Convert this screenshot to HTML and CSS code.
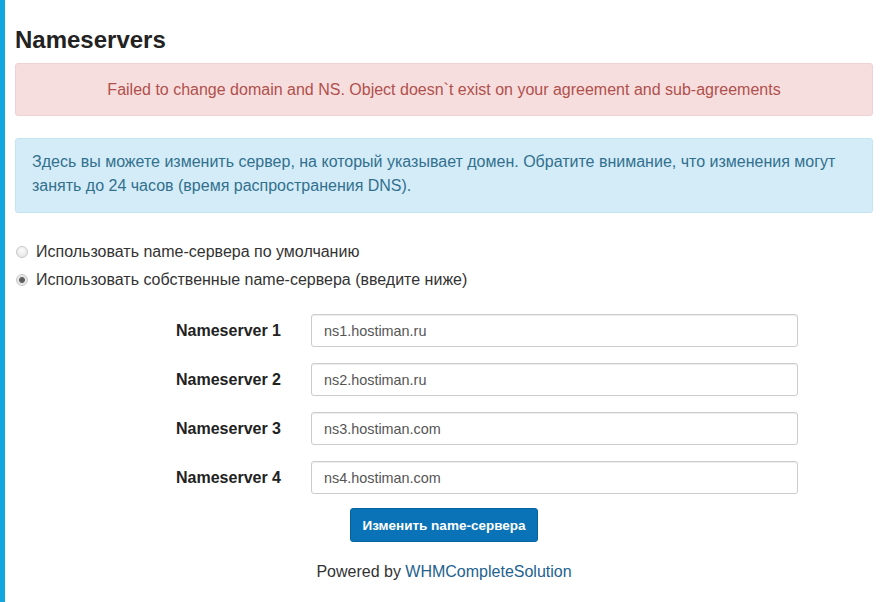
FILE: index.html
```html
<!DOCTYPE html>
<html>
<head>
<meta charset="utf-8">
<link rel="stylesheet" href="styles.css">
</head>
<body>
<div class="sidebar"></div>
<main class="content">
  <h1 class="title">Nameservers</h1>
  <div class="alert alert-danger">Failed to change domain and NS. Object doesn`t exist on your agreement and sub-agreements</div>
  <div class="alert alert-info">Здесь вы можете изменить сервер, на который указывает домен. Обратите внимание, что изменения могут занять до 24 часов (время распространения DNS).</div>
  <div class="radios">
    <label class="radio"><input type="radio" name="ns"> Использовать name-сервера по умолчанию</label>
    <label class="radio"><input type="radio" name="ns" checked> Использовать собственные name-сервера (введите ниже)</label>
  </div>
  <form class="ns-form">
    <div class="row"><label class="row-label">Nameserver 1</label><input class="field" type="text" value="ns1.hostiman.ru"></div>
    <div class="row"><label class="row-label">Nameserver 2</label><input class="field" type="text" value="ns2.hostiman.ru"></div>
    <div class="row"><label class="row-label">Nameserver 3</label><input class="field" type="text" value="ns3.hostiman.com"></div>
    <div class="row"><label class="row-label">Nameserver 4</label><input class="field" type="text" value="ns4.hostiman.com"></div>
    <div class="actions"><button type="button" class="btn">Изменить name-сервера</button></div>
  </form>
  <p class="powered">Powered by <a href="#">WHMCompleteSolution</a></p>
</main>
</body>
</html>
```
FILE: styles.css
```css
html, body {
  margin: 0;
  padding: 0;
  background: #fff;
}
body {
  font-family: "Liberation Sans", Arial, sans-serif;
  font-size: 16px;
  color: #333;
  display: flex;
  min-height: 602px;
}
.sidebar {
  width: 5px;
  background: #12a6e0;
  flex: none;
}
.content {
  width: 858px;
  margin-left: 10px;
}
.title {
  font-size: 24px;
  font-weight: bold;
  color: #222;
  margin: 27px 0 10px;
  line-height: 26px;
}
.alert {
  border: 1px solid transparent;
  border-radius: 3px;
  line-height: 24px;
}
.alert-danger {
  background: #f7dede;
  border-color: #f0d2d5;
  color: #b0504c;
  text-align: center;
  padding: 14px 15px 13px;
  margin-bottom: 22px;
}
.alert-info {
  background: #d4ecf7;
  border-color: #c3e5f2;
  color: #31708f;
  padding: 11px 16px 14px;
  margin-bottom: 27px;
}
.radios {
  display: flex;
  flex-direction: column;
  gap: 4px;
}
.radio {
  display: flex;
  align-items: center;
  line-height: 24px;
  color: #333;
}
.radio input {
  appearance: none;
  -webkit-appearance: none;
  margin: 0 8px 0 1px;
  width: 12px;
  height: 12px;
  border-radius: 50%;
  border: 1px solid #c8c8c8;
  background: radial-gradient(circle at 50% 35%, #fbfbfb 0%, #e2e2e2 100%);
  box-sizing: border-box;
  flex: none;
}
.radio input:checked {
  background: radial-gradient(circle, #555 0, #666 2.5px, #e4e4e4 3.5px, #efefef 100%);
}
.ns-form {
  margin-top: 22px;
}
.row {
  display: flex;
  align-items: center;
  margin-bottom: 16px;
}
.row-label {
  width: 266px;
  text-align: right;
  font-weight: bold;
  color: #222;
  margin-right: 30px;
}
.field {
  width: 487px;
  height: 33px;
  box-sizing: border-box;
  border: 1px solid #ccc;
  border-radius: 3px;
  padding: 0 12px;
  font-family: "Liberation Sans", Arial, sans-serif;
  font-size: 14.4px;
  color: #555;
  box-shadow: inset 0 1px 1px rgba(0,0,0,0.075);
}
.actions {
  display: flex;
  justify-content: center;
  margin-top: -2px;
}
.btn {
  background: #0a73b8;
  color: #fff;
  border: 1px solid #08649f;
  border-radius: 3px;
  font-family: "Liberation Sans", Arial, sans-serif;
  font-weight: bold;
  font-size: 13.5px;
  height: 34px;
  width: 188px;
  padding: 0;
}
.powered {
  text-align: center;
  margin: 18px 0 0;
  line-height: 24px;
  color: #333;
}
.powered a {
  color: #23628f;
  text-decoration: none;
}
```
